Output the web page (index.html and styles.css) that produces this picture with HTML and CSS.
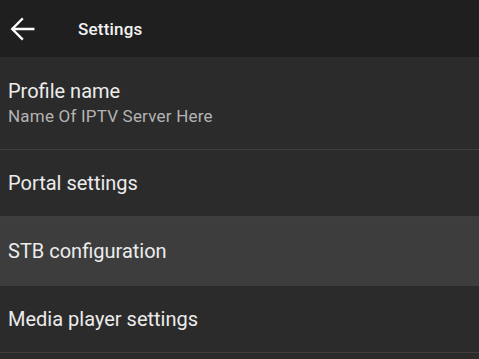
FILE: index.html
```html
<!DOCTYPE html>
<html>
<head>
<meta charset="utf-8">
<link rel="stylesheet" href="styles.css">
</head>
<body>
<div class="app">
  <header class="toolbar">
    <svg class="back" viewBox="0 0 24 24"><path d="M21 12H4.5M12 4.2L4.2 12L12 19.8" fill="none" stroke="#ffffff" stroke-width="1.9" stroke-linecap="square" stroke-linejoin="miter"/></svg>
    <span class="title">Settings</span>
  </header>
  <div class="item item-two">
    <div class="primary">Profile name</div>
    <div class="secondary">Name Of IPTV Server Here</div>
  </div>
  <div class="item">
    <div class="primary">Portal settings</div>
  </div>
  <div class="item selected">
    <div class="primary">STB configuration</div>
  </div>
  <div class="item">
    <div class="primary">Media player settings</div>
  </div>
</div>
</body>
</html>
```
FILE: styles.css
```css
html, body {
  margin: 0;
  padding: 0;
  background: #2b2b2b;
}
.app {
  font-family: Roboto, "Noto Sans", sans-serif;
  width: 479px;
  height: 359px;
  overflow: hidden;
  background: #2b2b2b;
}
.toolbar {
  height: 57px;
  background: #1f1f1f;
  display: flex;
  align-items: center;
  padding-left: 7px;
  box-sizing: border-box;
}
.back {
  width: 30px;
  height: 30px;
  display: block;
}
.title {
  color: #f2f2f2;
  font-size: 17px;
  font-weight: 500;
  letter-spacing: 0.2px;
  margin-left: 41px;
}
.item {
  height: 67px;
  border-bottom: 1px solid #3f3f3f;
  display: flex;
  flex-direction: column;
  justify-content: center;
  padding-left: 8px;
  box-sizing: border-box;
}
.item-two {
  height: 93px;
}
.selected {
  background: #3d3d3d;
  border-bottom-color: #3d3d3d;
  height: 69px;
}
.primary {
  color: #ececec;
  font-size: 20px;
  line-height: 26px;
}
.secondary {
  color: #b4b4b4;
  font-size: 17px;
  letter-spacing: 0.2px;
  line-height: 24px;
}
```
